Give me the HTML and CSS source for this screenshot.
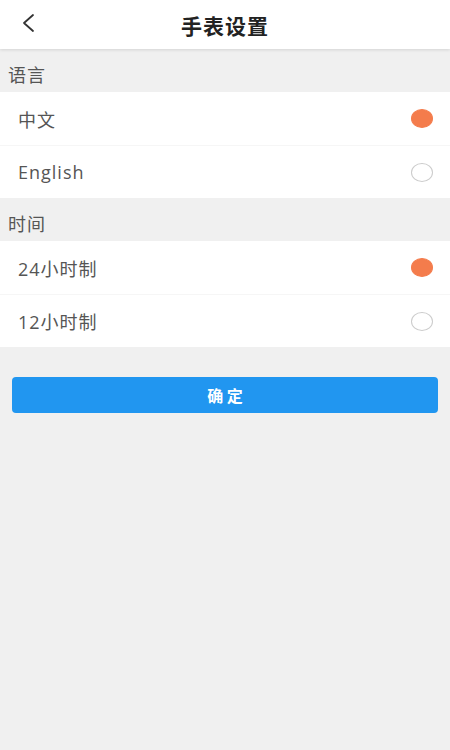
FILE: index.html
```html
<!DOCTYPE html>
<html lang="zh-CN">
<head>
    <meta charset="UTF-8">
    <meta name="viewport" content="width=device-width, initial-scale=1.0">
    <title>手表设置</title>
    <link rel="stylesheet" href="styles.css">
</head>
<body>
    <div class="header">
        <span class="back">
            <svg width="16" height="20" viewBox="0 0 16 20"><path d="M12 2 L3 10 L12 18" fill="none" stroke="#333" stroke-width="1.8" stroke-linecap="round" stroke-linejoin="round"/></svg>
        </span>
        <h1>手表设置</h1>
    </div>

    <div class="section-title">语言</div>
    <div class="group">
        <div class="row">
            <span>中文</span>
            <span class="radio checked"></span>
        </div>
        <div class="row">
            <span>English</span>
            <span class="radio"></span>
        </div>
    </div>

    <div class="section-title">时间</div>
    <div class="group">
        <div class="row">
            <span>24小时制</span>
            <span class="radio checked"></span>
        </div>
        <div class="row">
            <span>12小时制</span>
            <span class="radio"></span>
        </div>
    </div>

    <div class="actions">
        <button class="confirm">确 定</button>
    </div>
</body>
</html>
```

FILE: styles.css
```css
html, body {
    margin: 0;
    padding: 0;
}
body {
    background: #f0f0f0;
    font-family: "Open Sans", "Noto Sans CJK SC", sans-serif;
    color: #555;
    min-height: 750px;
}
.header {
    height: 49px;
    background: #fff;
    display: flex;
    align-items: center;
    justify-content: center;
    position: relative;
    box-shadow: 0 1px 3px rgba(0, 0, 0, 0.12);
}
.header h1 {
    margin: 0;
    font-size: 21px;
    font-weight: bold;
    color: #222;
    letter-spacing: 1px;
    font-family: "Noto Sans CJK SC", sans-serif;
}
.back {
    position: absolute;
    left: 21px;
    top: 13px;
    line-height: 0;
}
.section-title {
    height: 43px;
    padding-left: 8px;
    padding-top: 6px;
    display: flex;
    align-items: center;
    font-size: 18px;
    letter-spacing: 1px;
    color: #555;
    box-sizing: border-box;
    font-family: "Noto Sans CJK SC", sans-serif;
}
.group {
    background: #fff;
}
.row {
    height: 53px;
    display: flex;
    align-items: center;
    justify-content: space-between;
    padding: 0 17px 0 18px;
    font-size: 18px;
    letter-spacing: 1px;
    color: #555;
    box-sizing: border-box;
}
.row + .row {
    border-top: 1px solid #f6f6f6;
}
.radio {
    width: 22px;
    height: 19px;
    border-radius: 50%;
    border: 1px solid #ccc;
    box-sizing: border-box;
}
.radio.checked {
    background: #f47c4c;
    border-color: #f47c4c;
}
.actions {
    padding: 30px 12px 0;
}
.confirm {
    display: block;
    width: 100%;
    height: 36px;
    border: none;
    border-radius: 4px;
    background: #2196f0;
    color: #fff;
    font-size: 16px;
    font-weight: bold;
    font-family: "Noto Sans CJK SC", sans-serif;
}
```
